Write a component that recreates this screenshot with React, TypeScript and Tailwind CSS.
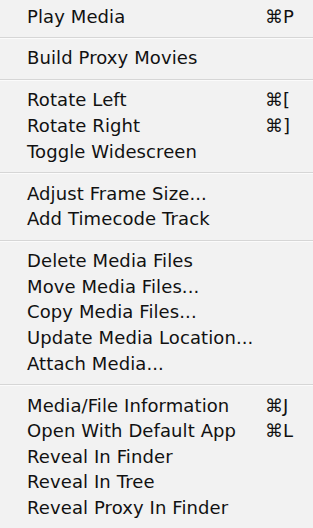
import React from "react";

type Item = { label: string; key?: string };

const groups: Item[][] = [
  [{ label: "Play Media", key: "⌘P" }],
  [{ label: "Build Proxy Movies" }],
  [
    { label: "Rotate Left", key: "⌘[" },
    { label: "Rotate Right", key: "⌘]" },
    { label: "Toggle Widescreen" },
  ],
  [{ label: "Adjust Frame Size..." }, { label: "Add Timecode Track" }],
  [
    { label: "Delete Media Files" },
    { label: "Move Media Files..." },
    { label: "Copy Media Files..." },
    { label: "Update Media Location..." },
    { label: "Attach Media..." },
  ],
  [
    { label: "Media/File Information", key: "⌘J" },
    { label: "Open With Default App", key: "⌘L" },
    { label: "Reveal In Finder" },
    { label: "Reveal In Tree" },
    { label: "Reveal Proxy In Finder" },
  ],
];

function Row({ item }: { item: Item }) {
  return (
    <div className="flex h-[25.6px] items-center pl-[27px] leading-[25.6px]">
      <span className="flex-1 whitespace-nowrap">{item.label}</span>
      <span className="w-[48px] whitespace-nowrap">{item.key ?? ""}</span>
    </div>
  );
}

function Separator() {
  return (
    <div className="h-[16.4px] pt-[8px]">
      <div className="h-px bg-[#d6d6d6]" />
      <div className="h-px bg-[#fbfbfb]" />
    </div>
  );
}

export default function App() {
  return (
    <div
      className="h-[528px] w-[313px] overflow-hidden bg-[#f2f2f2] pt-[3.5px] text-[18px] tracking-[0.1px] text-[#111]"
      style={{ fontFamily: '"DejaVu Sans", "Liberation Sans", sans-serif' }}
    >
      {groups.map((g, gi) => (
        <div key={gi}>
          {gi > 0 && <Separator />}
          {g.map((it) => (
            <Row key={it.label} item={it} />
          ))}
        </div>
      ))}
    </div>
  );
}
